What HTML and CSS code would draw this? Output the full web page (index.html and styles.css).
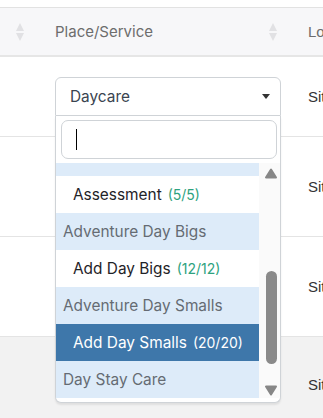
FILE: index.html
```html
<!DOCTYPE html>
<html lang="en">
<head>
  <meta charset="UTF-8">
  <meta name="viewport" content="width=device-width, initial-scale=1.0">
  <title>Bookings</title>
  <link rel="stylesheet" href="styles.css">
</head>
<body>
  <div class="table">
    <div class="row head">
      <div class="cell c1">
        <span class="sort"><i class="up"></i><i class="down"></i></span>
      </div>
      <div class="cell c2">
        <span>Place/Service</span>
        <span class="sort"><i class="up"></i><i class="down"></i></span>
      </div>
      <div class="cell c3">Location</div>
    </div>

    <div class="row first">
      <div class="cell c1"></div>
      <div class="cell c2">
        <div class="select-wrap">
          <div class="select">
            <span>Daycare</span>
            <i class="caret"></i>
          </div>
          <div class="dropdown">
            <div class="search">
              <div class="search-input"><span class="cursor"></span></div>
            </div>
            <div class="results">
              <div class="options">
                <div class="group"></div>
                <div class="option">Assessment <span class="count">(5/5)</span></div>
                <div class="group">Adventure Day Bigs</div>
                <div class="option">Add Day Bigs <span class="count">(12/12)</span></div>
                <div class="group">Adventure Day Smalls</div>
                <div class="option active">Add Day Smalls <span class="count">(20/20)</span></div>
                <div class="group">Day Stay Care</div>
              </div>
              <div class="scrollbar">
                <svg class="arrow" width="14" height="11" viewBox="0 0 14 11">
                  <polygon points="2,9.5 12,9.5 7,1.5" fill="#878787" stroke="#878787" stroke-width="2" stroke-linejoin="round"/>
                </svg>
                <div class="track"><div class="thumb"></div></div>
                <svg class="arrow" width="14" height="11" viewBox="0 0 14 11">
                  <polygon points="2,1.5 12,1.5 7,9.5" fill="#878787" stroke="#878787" stroke-width="2" stroke-linejoin="round"/>
                </svg>
              </div>
            </div>
          </div>
        </div>
      </div>
      <div class="cell c3">Site A</div>
    </div>

    <div class="row">
      <div class="cell c1"></div>
      <div class="cell c2"></div>
      <div class="cell c3">Site A</div>
    </div>

    <div class="row">
      <div class="cell c1"></div>
      <div class="cell c2"></div>
      <div class="cell c3">Site B</div>
    </div>

    <div class="row shaded">
      <div class="cell c1"></div>
      <div class="cell c2"></div>
      <div class="cell c3">Site B</div>
    </div>
  </div>
</body>
</html>
```

FILE: styles.css
```css
body {
  margin: 0;
  font-family: Inter, "Liberation Sans", sans-serif;
  background: #ffffff;
  overflow: hidden;
}

.table {
  padding-top: 7px;
  width: 100%;
  overflow: hidden;
}

.row {
  display: grid;
  grid-template-columns: 40px 253px 1fr;
  border-bottom: 1px solid #e4e4e4;
  height: 100px;
  box-sizing: border-box;
}

.row.head {
  height: 50px;
  background: #f7f7f9;
  border-top: 1px solid #e2e2e2;
  border-bottom: 2px solid #e6e6e6;
}

.row.first {
  height: 80px;
}

.row.shaded {
  background: #f2f2f2;
  height: 96px;
}

.cell {
  display: flex;
  align-items: center;
  min-width: 0;
}

.head .c1 {
  padding-left: 16px;
}

.head .c2 {
  justify-content: space-between;
  padding: 0 16px 0 15px;
  font-size: 15px;
  color: #6d6d6d;
}

.head .c3 {
  padding-left: 15px;
  font-size: 15px;
  color: #6d6d6d;
  white-space: nowrap;
}

.c3 {
  padding-left: 15px;
  font-family: "Liberation Sans", Arial, sans-serif;
  font-size: 15px;
  color: #333333;
  white-space: nowrap;
}

.sort {
  display: flex;
  flex-direction: column;
  gap: 2px;
}

.sort i {
  width: 0;
  height: 0;
  border-left: 4px solid transparent;
  border-right: 4px solid transparent;
}

.sort .up {
  border-bottom: 8px solid #e1e1e4;
}

.sort .down {
  border-top: 8px solid #e1e1e4;
}

.first .c2 {
  padding-left: 15px;
  align-items: flex-start;
  padding-top: 20px;
}

.select-wrap {
  position: relative;
  width: 226px;
}

.select {
  height: 39px;
  box-sizing: border-box;
  border: 1px solid #cfd3d7;
  border-radius: 6px 6px 0 0;
  display: flex;
  align-items: center;
  justify-content: space-between;
  padding: 0 10px 0 14px;
  font-size: 15.4px;
  color: #3a4450;
  background: #ffffff;
}

.caret {
  width: 0;
  height: 0;
  border-left: 4px solid transparent;
  border-right: 4px solid transparent;
  border-top: 5px solid #333333;
}

.dropdown {
  position: absolute;
  top: 39px;
  left: 0;
  width: 226px;
  box-sizing: border-box;
  background: #ffffff;
  border: 1px solid #cfd3d7;
  border-top: none;
  border-radius: 0 0 6px 6px;
  box-shadow: 0 2px 2px rgba(0, 0, 0, 0.08);
  padding-bottom: 4px;
  z-index: 2;
}

.search {
  padding: 4px 3px 4px 5px;
}

.search-input {
  height: 39px;
  box-sizing: border-box;
  border: 1px solid #cfd3d7;
  border-radius: 7px;
  display: flex;
  align-items: center;
  padding-left: 14px;
}

.cursor {
  width: 1px;
  height: 21px;
  background: #000000;
}

.results {
  display: flex;
  height: 235px;
}

.options {
  flex: 1;
  overflow: hidden;
  min-width: 0;
}

.options .group:first-child {
  margin-top: -24px;
}

.group,
.option {
  height: 37px;
  display: flex;
  align-items: center;
  font-size: 15.4px;
  white-space: nowrap;
}

.group {
  background: #ddebf9;
  color: #656b73;
  padding-left: 7px;
}

.option {
  background: #ffffff;
  color: #1f2328;
  padding-left: 17px;
}

.count {
  color: #2ea27e;
  font-size: 14px;
  margin-left: 6px;
}

.option.active {
  background: #3e77aa;
  color: #ffffff;
}

.option.active .count {
  color: #ffffff;
}

.scrollbar {
  width: 21px;
  background: #fafafa;
  display: flex;
  flex-direction: column;
  align-items: center;
  padding: 5px 0 2px 3px;
  box-sizing: border-box;
}

.arrow {
  display: block;
}

.track {
  flex: 1;
  display: flex;
  flex-direction: column;
  justify-content: flex-end;
  padding: 0 0 21px 1px;
}

.thumb {
  width: 11px;
  height: 93px;
  border-radius: 6px;
  background: #8a8a8a;
}
```
